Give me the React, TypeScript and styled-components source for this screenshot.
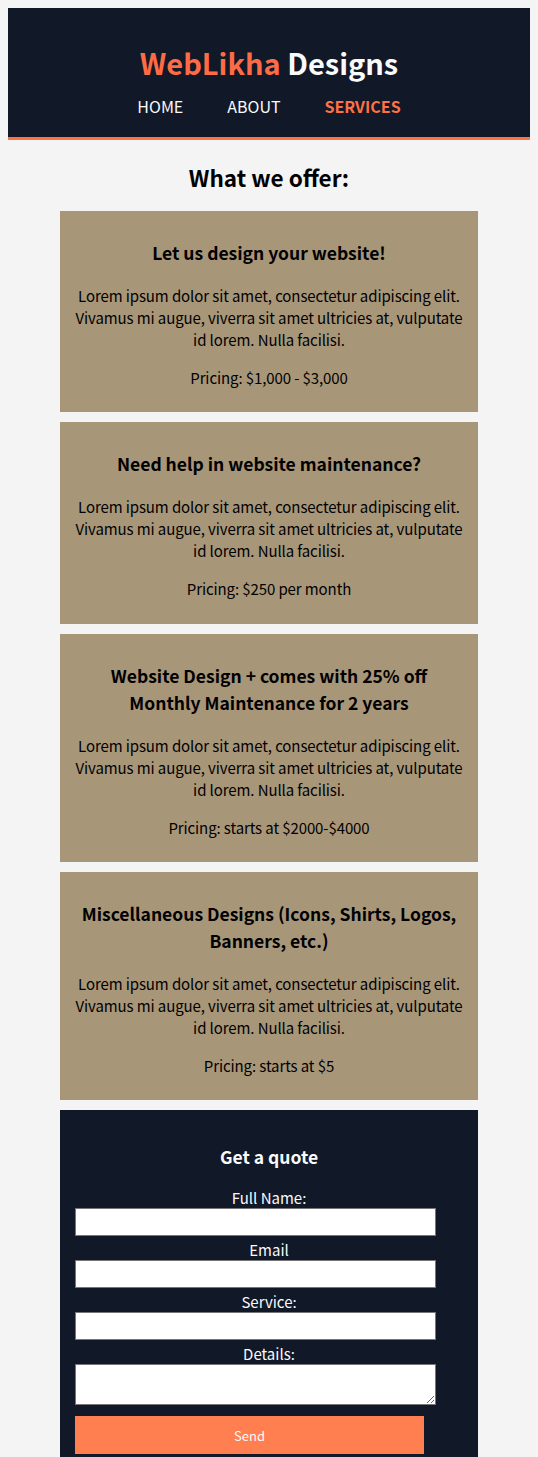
import React from "react";
import styled, { createGlobalStyle } from "styled-components";

const GlobalStyle = createGlobalStyle`
    body {
        margin: 8px;
        background-color: #f4f4f4;
        font-family: "Noto Sans CJK KR", "Noto Sans", sans-serif;
    }
`;

const Header = styled.header`
    background-color: #111827;
    border-bottom: 3px solid #ff7043;
    text-align: center;
    padding: 30px 0 19px;
`;

const Logo = styled.h1`
    font-size: 29px;
    font-weight: bold;
    color: #f9fafb;
    margin: 0 0 8px;
    line-height: 48px;
`;

const Accent = styled.span`
    color: #ff6b45;
`;

const Nav = styled.nav`
    display: flex;
    justify-content: center;
    gap: 44px;
`;

const NavLink = styled.a<{ $active?: boolean }>`
    color: ${(p) => (p.$active ? "#ff7043" : "#f9fafb")};
    font-weight: ${(p) => (p.$active ? "bold" : "normal")};
    font-size: 16px;
    line-height: 24px;
    text-decoration: none;
`;

const Main = styled.main`
    display: flex;
    flex-direction: column;
    align-items: center;
`;

const Heading = styled.h2`
    font-size: 22.5px;
    font-weight: bold;
    line-height: 30px;
    margin: 22px 0 19px;
`;

const Card = styled.section<{ $dark?: boolean }>`
    box-sizing: border-box;
    width: 418px;
    margin-bottom: 10px;
    padding: ${(p) => (p.$dark ? "33px 15px 4px" : "28px 10px 23.25px")};
    text-align: center;
    background-color: ${(p) => (p.$dark ? "#111827" : "#a89679")};
    color: ${(p) => (p.$dark ? "#f9fafb" : "#000")};
`;

const CardTitle = styled.h3<{ $dark?: boolean }>`
    font-size: 17.5px;
    font-weight: bold;
    line-height: 27px;
    padding: 0 ${(p) => (p.$dark ? "0" : "8px")};
    margin: 0 0 ${(p) => (p.$dark ? "17px" : "19px")};
`;

const CardText = styled.p`
    font-size: 15px;
    letter-spacing: -0.1px;
    line-height: 22px;
    margin: 0 0 16px;

    &:last-child {
        margin-bottom: 0;
    }
`;

const Form = styled.form`
    display: flex;
    flex-direction: column;
`;

const Label = styled.label`
    font-size: 15px;
    line-height: 21px;
`;

const Input = styled.input`
    box-sizing: border-box;
    width: 361px;
    height: 28px;
    border: 1px solid #767676;
    margin: 0 0 3px;
`;

const TextArea = styled.textarea`
    box-sizing: border-box;
    width: 361px;
    height: 41px;
    border: 1px solid #767676;
    margin: 0 0 11px;
`;

const SendButton = styled.button`
    width: 349px;
    height: 38px;
    border: none;
    background-color: #ff7f50;
    color: #f9fafb;
    font-family: "Noto Sans CJK KR", "Noto Sans", sans-serif;
    font-size: 13px;
`;

const services = [
    { title: "Let us design your website!", price: "Pricing: $1,000 - $3,000" },
    { title: "Need help in website maintenance?", price: "Pricing: $250 per month" },
    { title: "Website Design + comes with 25% off Monthly Maintenance for 2 years", price: "Pricing: starts at $2000-$4000" },
    { title: "Miscellaneous Designs (Icons, Shirts, Logos, Banners, etc.)", price: "Pricing: starts at $5" },
];

const lorem = "Lorem ipsum dolor sit amet, consectetur adipiscing elit. Vivamus mi augue, viverra sit amet ultricies at, vulputate id lorem. Nulla facilisi.";

export default function App() {
    return (
        <>
            <GlobalStyle />
            <Header>
                <Logo><Accent>WebLikha</Accent> Designs</Logo>
                <Nav>
                    <NavLink href="#">HOME</NavLink>
                    <NavLink href="#">ABOUT</NavLink>
                    <NavLink href="#" $active>SERVICES</NavLink>
                </Nav>
            </Header>

            <Main>
                <Heading>What we offer:</Heading>

                {services.map((s) => (
                    <Card key={s.title}>
                        <CardTitle>{s.title}</CardTitle>
                        <CardText>{lorem}</CardText>
                        <CardText>{s.price}</CardText>
                    </Card>
                ))}

                {/*quote form*/}
                <Card $dark>
                    <CardTitle $dark>Get a quote</CardTitle>
                    <Form>
                        <Label>Full Name:</Label>
                        <Input type="text" />
                        <Label>Email</Label>
                        <Input type="email" />
                        <Label>Service:</Label>
                        <Input type="text" />
                        <Label>Details:</Label>
                        <TextArea />
                        <SendButton type="button">Send</SendButton>
                    </Form>
                </Card>
            </Main>
        </>
    );
}
